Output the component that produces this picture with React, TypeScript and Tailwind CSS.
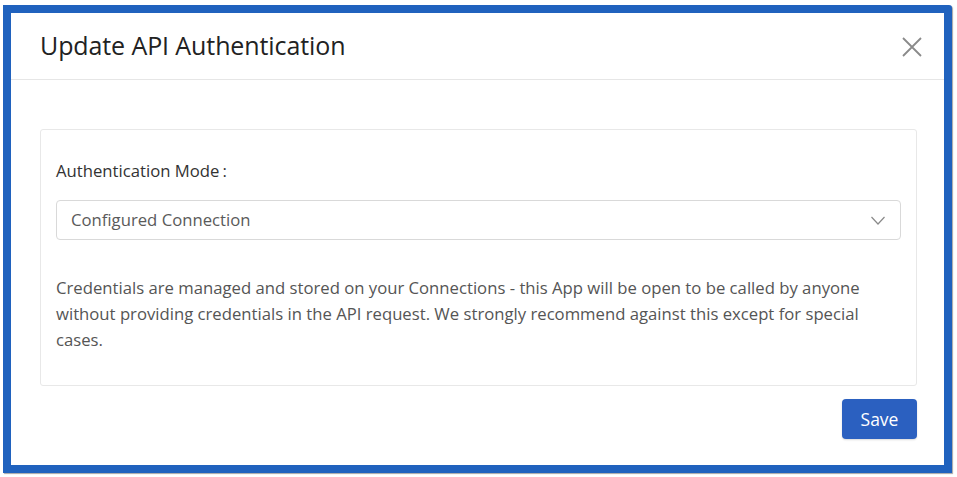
export default function App() {
  return (
    <div className="w-[957px] h-[477px] bg-white pl-[3px] pt-[5px] font-['Open_Sans',sans-serif]">
      <div className="w-[949px] h-[468px] border-8 border-[#2062be] bg-white shadow-[1px_1px_1px_rgba(0,0,0,0.35)] rounded-tr-[3px] flex flex-col">
        {/* Header */}
        <div className="h-[67px] shrink-0 border-b border-[#e6e6e6] flex items-center justify-between pl-[29px] pr-[22px]">
          <h2 className="text-[25px] text-[#222] font-medium tracking-[-0.1px]">
            Update API Authentication
          </h2>
          <button className="text-[#8a8a8a] pt-[2px]">
            <svg width="20" height="20" viewBox="0 0 20 20" fill="none" stroke="currentColor" strokeWidth="1.8">
              <path d="M1 1 L19 19 M19 1 L1 19" />
            </svg>
          </button>
        </div>

        {/* Body */}
        <div className="pl-[29px] pr-[27px] pt-[49px]">
          <div className="h-[257px] border border-[#e8e8e8] rounded-[3px] px-[15px] pt-[30px]">
            <label className="block text-[16.7px] leading-[22px] text-[#333]">
              Authentication Mode<span className="ml-[3px]">:</span>
            </label>
            <div className="mt-[18px] h-[40px] border border-[#d9d9d9] rounded-[4px] flex items-center justify-between pl-[14px] pr-[15px]">
              <span className="text-[16.7px] text-[#5a5a5a]">Configured Connection</span>
              <svg width="14" height="9" viewBox="0 0 14 9" fill="none" stroke="#8a8a8a" strokeWidth="1.2">
                <path d="M0.5 1 L7 8 L13.5 1" />
              </svg>
            </div>
            <p className="mt-[35px] w-[830px] text-[16.7px] leading-[26px] text-[#555]">
              Credentials are managed and stored on your Connections - this App will be open to be
              called by anyone without providing credentials in the API request. We strongly
              recommend against this except for special cases.
            </p>
          </div>
          <div className="flex justify-end mt-[13px]">
            <button className="w-[75px] h-[40px] bg-[#2b60c0] text-white text-[17.5px] rounded-[4px] shadow-[0_1px_2px_rgba(0,0,0,0.15)]">
              Save
            </button>
          </div>
        </div>
      </div>
    </div>
  );
}
